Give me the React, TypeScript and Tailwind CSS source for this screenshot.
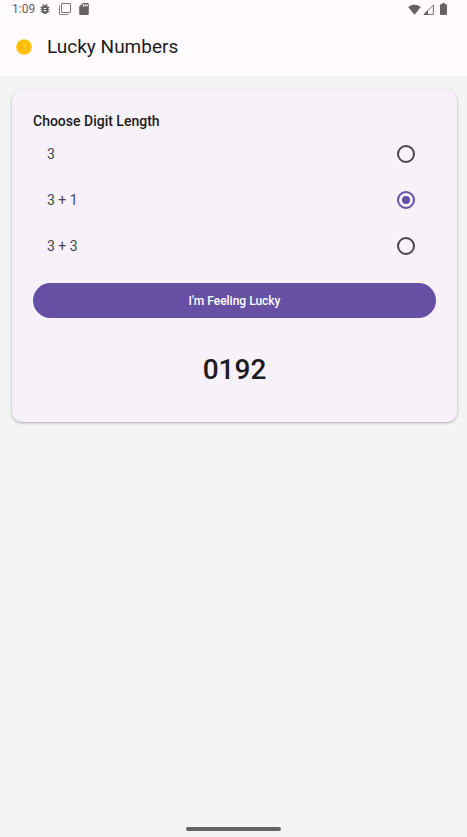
import { useState } from "react";

const OPTIONS = ["3", "3 + 1", "3 + 3"];

function StatusBar() {
  return (
    <div className="flex h-[18px] items-center justify-between pl-3 pr-5 text-[#646265]">
      <div className="flex items-center">
        <span className="w-7 text-xs">1:09</span>
        <svg className="size-[10px]" viewBox="3 3 18 18" fill="currentColor" aria-hidden="true">
          <path d="M20 8h-2.81a5.985 5.985 0 0 0-1.82-1.96L17 4.41 15.59 3l-2.17 2.17a6.002 6.002 0 0 0-2.83 0L8.41 3 7 4.41l1.62 1.63C7.88 6.55 7.26 7.22 6.81 8H4v2h2.09c-.05.33-.09.66-.09 1v1H4v2h2v1c0 .34.04.67.09 1H4v2h2.81c1.04 1.79 2.97 3 5.19 3s4.15-1.21 5.19-3H20v-2h-2.09c.05-.33.09-.66.09-1v-1h2v-2h-2v-1c0-.34-.04-.67-.09-1H20V8zm-6 8h-4v-2h4v2zm0-4h-4v-2h4v2z" />
        </svg>
        <svg className="ml-[9px] size-3" viewBox="0 0 12 12" fill="none" stroke="currentColor" aria-hidden="true">
          <rect x="2.5" y="0.5" width="9" height="9" rx="0.6" strokeWidth="0.9" />
          <path d="M0.500 2.500v8.300q0 .7.7.7h8.300" strokeWidth="0.8" />
        </svg>
        <svg className="ml-2 h-3 w-[10px]" viewBox="4 2 16 20" fill="currentColor" aria-hidden="true">
          <path d="M18 2h-8L4.02 8 4 20c0 1.100.9 2 2 2h12c1.100 0 2-.9 2-2V4c0-1.100-.9-2-2-2zm-6 6h-2V4h2v4zm3 0h-2V4h2v4zm3 0h-2V4h2v4z" />
        </svg>
      </div>
      <div className="flex items-center">
        <svg className="h-[11px] w-[13px]" viewBox="0 0 13 11" fill="currentColor" aria-hidden="true">
          <path d="M6.500 10.700 0.200 3.100C3.500-.2 9.500-.2 12.800 3.100Z" />
        </svg>
        <svg className="ml-[2px] size-[11px]" viewBox="0 0 11 11" aria-hidden="true">
          <path d="M10.400 1v9.400H1Z" fill="none" stroke="currentColor" strokeWidth="0.9" />
          <path d="M5 6v5H.3Z" fill="currentColor" />
        </svg>
        <svg className="ml-[6px] h-3 w-[7px]" viewBox="0 0 7 12" fill="currentColor" aria-hidden="true">
          <path d="M2.200 0h2.600v1.200h1.500q.7 0 .7.7v9.400q0 .7-.7.7H.7Q0 12 0 11.300V1.900q0-.7.7-.7h1.500Z" />
        </svg>
      </div>
    </div>
  );
}

function CoinIcon() {
  return (
    <svg className="size-4" viewBox="0 0 16 16" aria-hidden="true">
      <circle cx="8" cy="8" r="7.800" fill="#ffc107" />
      <circle cx="8" cy="8" r="5.300" fill="#fdb900" />
      <path
        d="M6 5h2.500a1.400 1.400 0 0 1 0 2.900H6.800M8.500 7.900a1.500 1.500 0 0 1 0 3H6"
        fill="none"
        stroke="#ffd54a"
        strokeWidth="1"
      />
    </svg>
  );
}

export default function App() {
  const [length, setLength] = useState("3 + 1");
  const [result, setResult] = useState("0192");

  const draw = () => {
    const digits = length.split("+").reduce((sum, part) => sum + Number(part), 0);
    setResult(Array.from({ length: digits }, () => Math.floor(Math.random() * 10)).join(""));
  };

  return (
    <div className="flex min-h-screen flex-col bg-[#f4f4f4] font-[Roboto,sans-serif] text-[#1d1b20]">
      <header className="bg-[#fffbfe]">
        <StatusBar />
        <div className="flex h-[58px] items-center gap-[15px] px-4">
          <CoinIcon />
          <h1 className="text-[19px] leading-7">Lucky Numbers</h1>
        </div>
      </header>

      <main className="flex-1 pl-3 pr-[10px] pt-[14px]">
        <section className="rounded-[10px] bg-[#f7f2f9] px-[21px] pb-8 pt-[21px] shadow-[0_1px_3px_rgba(0,0,0,0.3)]">
          <fieldset>
            <legend className="text-sm font-medium">Choose Digit Length</legend>
            {OPTIONS.map((option) => (
              <label
                key={option}
                className="flex h-[46px] cursor-pointer items-center justify-between pl-[14px] pr-[21px] text-sm text-[#49454f]"
              >
                {option}
                <input
                  type="radio"
                  name="digit-length"
                  value={option}
                  checked={length === option}
                  onChange={() => setLength(option)}
                  className="grid size-[18px] appearance-none place-items-center rounded-full border-2 border-[#49454f] before:size-2 before:rounded-full checked:border-[#6750a4] checked:before:bg-[#6750a4]"
                />
              </label>
            ))}
          </fieldset>
          <button
            type="button"
            onClick={draw}
            className="mt-[14px] h-[35px] w-full cursor-pointer rounded-full bg-[#6750a4] text-xs font-medium text-white"
          >
            I'm Feeling Lucky
          </button>
          <output className="mt-8 block text-center text-[28px] font-medium leading-10">{result}</output>
        </section>
      </main>

      <footer className="flex justify-center pb-[6px]">
        <div className="h-1 w-[95px] rounded-full bg-[#646464]" />
      </footer>
    </div>
  );
}
